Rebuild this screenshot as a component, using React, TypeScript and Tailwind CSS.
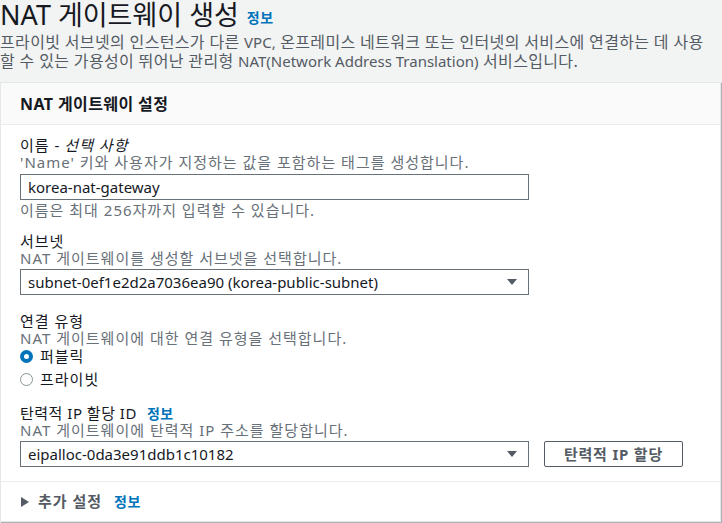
import React from 'react';

const font = { fontFamily: '"Noto Sans", "Noto Sans CJK KR", sans-serif' };

const Info = ({ className = '' }: { className?: string }) => (
  <span className={`text-[14px] font-bold tracking-[0.5px] text-[#0073bb] ${className}`}>정보</span>
);

const Caret = () => (
  <svg width="12" height="8" viewBox="0 0 12 8" className="shrink-0">
    <path d="M1 1h10L6 7z" fill="#545b64" />
  </svg>
);

const Select = ({ value }: { value: string }) => (
  <div className="flex h-[26px] w-[509px] items-center justify-between border border-[#687078] bg-white pl-[7px] pr-[10px] text-[15px] text-[#16191f]">
    <span className="leading-[24px]">{value}</span>
    <Caret />
  </div>
);

const Field = ({
  label,
  desc,
  children,
}: {
  label: React.ReactNode;
  desc: string;
  children: React.ReactNode;
}) => (
  <div className="flex flex-col">
    <div className="flex h-[18px] items-center text-[15px] tracking-[1px] text-[#16191f]">{label}</div>
    <div className="flex h-[17px] items-center text-[15px] tracking-[1px] text-[#687078]">{desc}</div>
    <div className="mt-[2px]">{children}</div>
  </div>
);

const Radio = ({ checked, label }: { checked?: boolean; label: string }) => (
  <label className="flex h-[23px] items-center gap-[7px] text-[15px] tracking-[1px] text-[#16191f]">
    {checked ? (
      <span className="h-[13px] w-[13px] rounded-full border-[4px] border-[#0073bb] bg-white" />
    ) : (
      <span className="h-[13px] w-[13px] rounded-full border border-[#879596] bg-white" />
    )}
    {label}
  </label>
);

export default function App() {
  return (
    <div className="h-[523px] w-[722px] overflow-hidden bg-[#f2f3f3]" style={font}>
      <div className="flex h-[30px] items-center gap-[8px]">
        <h1 className="text-[27px] leading-[30px] text-[#16191f]">NAT 게이트웨이 생성</h1>
        <Info className="mt-[4px]" />
      </div>
      <p className="mt-[3px] w-[712px] text-[16px] leading-[19px] tracking-[0.35px] text-[#545b64]">
        프라이빗 서브넷의 인스턴스가 다른 <span className="text-[15px] tracking-normal">VPC,</span> 온프레미스 네트워크 또는 인터넷의 서비스에 연결하는 데 사용할 수 있는 가용성이 뛰어난 관리형{' '}
        <span className="text-[15px] tracking-normal">NAT(Network Address Translation)</span> 서비스입니다.
      </p>

      <div className="mt-[11px] w-[721px] border border-[#e4e8e8] bg-white shadow-[1px_1px_1px_rgba(0,28,36,0.3)]">
        <div className="flex h-[42px] items-center border-b border-[#eaeded] bg-[#fafafa] px-[19px] text-[16px] font-bold tracking-[0.4px] text-[#16191f]">
          NAT 게이트웨이 설정
        </div>

        <div className="flex flex-col px-[19px] pt-[11px]">
          <Field
            label={
              <>
                이름 - <i className="ml-[4px]">선택 사항</i>
              </>
            }
            desc="'Name' 키와 사용자가 지정하는 값을 포함하는 태그를 생성합니다."
          >
            <div className="mt-[1px] flex h-[26px] w-[509px] items-center border border-[#687078] bg-white px-[7px] text-[15px] text-[#16191f]">
              korea-nat-gateway
            </div>
            <div className="mt-[1px] flex h-[18px] items-center text-[15px] tracking-[1px] text-[#687078]">
              이름은 최대 256자까지 입력할 수 있습니다.
            </div>
          </Field>

          <div className="mt-[13px]">
            <Field label="서브넷" desc="NAT 게이트웨이를 생성할 서브넷을 선택합니다.">
              <Select value="subnet-0ef1e2d2a7036ea90 (korea-public-subnet)" />
            </Field>
          </div>

          <div className="mt-[17px]">
            <Field label="연결 유형" desc="NAT 게이트웨이에 대한 연결 유형을 선택합니다.">
              <div className="-mt-[4px] flex flex-col">
                <Radio checked label="퍼블릭" />
                <Radio label="프라이빗" />
              </div>
            </Field>
          </div>

          <div className="mt-[13px]">
            <Field
              label={
                <span className="flex items-center gap-[10px] tracking-[0.5px]">
                  탄력적 IP 할당 ID <Info />
                </span>
              }
              desc="NAT 게이트웨이에 탄력적 IP 주소를 할당합니다."
            >
              <div className="flex items-center gap-[15px]">
                <Select value="eipalloc-0da3e91ddb1c10182" />
                <button className="flex h-[26px] w-[139px] items-center justify-center rounded-[2px] border border-[#545b64] bg-white text-[15px] font-bold tracking-[0.8px] text-[#545b64]">
                  탄력적 IP 할당
                </button>
              </div>
            </Field>
          </div>
        </div>

        <div className="mt-[14px] border-t border-[#eaeded]" />
        <div className="flex h-[39px] items-center gap-[9px] px-[20px] text-[15px] font-bold tracking-[1px] text-[#545b64]">
          <svg width="8" height="10" viewBox="0 0 8 10">
            <path d="M0 0l8 5-8 5z" fill="#545b64" />
          </svg>
          <span>추가 설정</span>
          <Info className="ml-[3px]" />
        </div>
      </div>
    </div>
  );
}
